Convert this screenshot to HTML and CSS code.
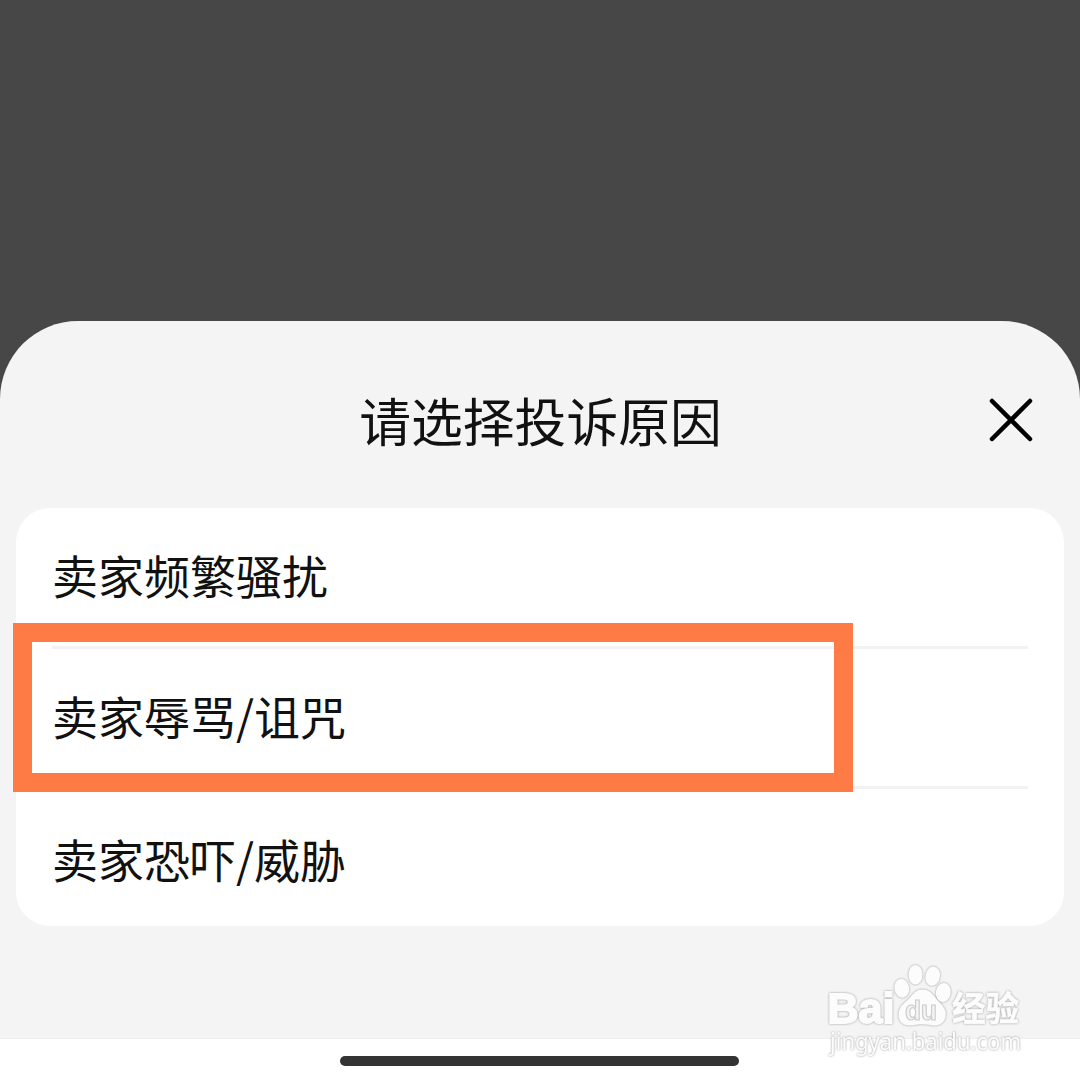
FILE: index.html
```html
<!DOCTYPE html>
<html lang="zh-CN">
<head>
<meta charset="utf-8">
<title>请选择投诉原因</title>
<link rel="stylesheet" href="styles.css">
</head>
<body>
<main class="screen">
  <section class="sheet">
    <header class="sheet-header">
      <h1 class="title">请选择投诉原因</h1>
      <button class="close" aria-label="关闭">
        <svg viewBox="0 0 44 44" width="44" height="44"><path d="M3 3 41 41M41 3 3 41"/></svg>
      </button>
    </header>
    <ul class="reasons">
      <li class="reason">卖家频繁骚扰</li>
      <li class="reason reason-marked">卖家辱骂/诅咒<span class="marker"></span></li>
      <li class="reason">卖家恐吓/威胁</li>
    </ul>
  </section>
  <footer class="nav"><div class="handle"></div></footer>
  <svg class="watermark" viewBox="0 0 230 120" width="230" height="120">
    <text class="brand" x="17.500" y="73" textLength="67" lengthAdjust="spacingAndGlyphs">Bai</text>
    <ellipse cx="91.8" cy="38.3" rx="7.4" ry="9.5" transform="rotate(-10 91.8 38.3)"/>
    <ellipse cx="105.5" cy="24.8" rx="7" ry="9.8"/>
    <ellipse cx="122.7" cy="26.2" rx="7.3" ry="9.7" transform="rotate(10 122.7 26.2)"/>
    <ellipse cx="133.3" cy="42.5" rx="7.4" ry="9.5" transform="rotate(8 133.3 42.5)"/>
    <path d="M112.5 39.5C107 39.5 103.500 43 100.500 47C97 51.500 90 55 88.700 62C87.500 71 93 75.700 100 75.300C105 75 108 74.300 112.500 74.300C118 74.300 122 76 127 75.300C133 74.500 137 69 135.500 61.500C134 55.500 128.500 52 125 47C121.500 42.500 118 39.500 112.500 39.500Z"/>
    <text class="du" x="95" y="70" textLength="32" lengthAdjust="spacingAndGlyphs">du</text>
    <text class="cn" x="142" y="70.500" textLength="67" lengthAdjust="spacingAndGlyphs">经验</text>
    <text class="site" x="20" y="100" textLength="191" lengthAdjust="spacingAndGlyphs">jingyan.baidu.com</text>
  </svg>
</main>
</body>
</html>
```
FILE: styles.css
```css
* { box-sizing: border-box; }
body {
  margin: 0;
  background: #474747;
  color: #111;
  font-family: "Noto Sans CJK SC", sans-serif;
}
.screen {
  position: relative;
  display: flex;
  flex-direction: column;
  width: 1080px;
  height: 1080px;
  padding-top: 321px;
  overflow: hidden;
}
.sheet {
  flex: 1;
  padding: 0 16px;
  background: #f4f4f4;
  border-radius: 78px 78px 0 0;
  border-bottom: 1px solid #eee;
}
.sheet-header {
  display: grid;
  grid-template-columns: 1fr auto 1fr;
  align-items: center;
  height: 187px;
  padding: 11px 31px 0 32px;
}
.title {
  grid-column: 2;
  margin: 0;
  font-size: 51.8px;
  font-weight: 400;
  line-height: 76px;
}
.close {
  justify-self: end;
  display: flex;
  padding: 0;
  border: 0;
  background: none;
}
.close svg {
  fill: none;
  stroke: #000;
  stroke-width: 4.5;
  stroke-linecap: round;
}
.reasons {
  display: grid;
  grid-template-rows: 141px 140px 137px;
  margin: 0;
  padding: 0 36px;
  list-style: none;
  background: #fff;
  border-radius: 34px;
}
.reason {
  display: flex;
  align-items: center;
  padding-bottom: 6px;
  font-size: 46px;
  line-height: 68px;
  border-bottom: 3px solid #f2f2f2;
}
.reason:last-child {
  padding-bottom: 0;
  border-bottom: 0;
}
.reason-marked {
  position: relative;
  padding-bottom: 5px;
}
.marker {
  position: absolute;
  left: -39px;
  top: -26px;
  width: 840px;
  height: 169px;
  border: 19px solid #ff7b45;
}
.nav {
  display: flex;
  justify-content: center;
  height: 41px;
  padding-top: 17px;
  background: #fff;
}
.handle {
  width: 399px;
  height: 10px;
  margin-right: 1px;
  border-radius: 5px;
  background: #333;
}
.watermark {
  position: absolute;
  left: 810px;
  top: 950px;
  fill: #fcfcfc;
  filter: drop-shadow(0 0 0.8px #999);
}
.brand {
  font: 700 43px "Liberation Sans", sans-serif;
  stroke: #fcfcfc;
  stroke-width: 2;
}
.du {
  font: 700 28px "Liberation Sans", sans-serif;
  fill: #f4f4f4;
  stroke: #ccc;
  stroke-width: 1.2;
}
.cn {
  font: 700 34px "Noto Sans CJK SC", sans-serif;
  stroke: #fcfcfc;
  stroke-width: 0.6;
}
.site { font: 400 23px "Noto Sans", sans-serif; }
```
